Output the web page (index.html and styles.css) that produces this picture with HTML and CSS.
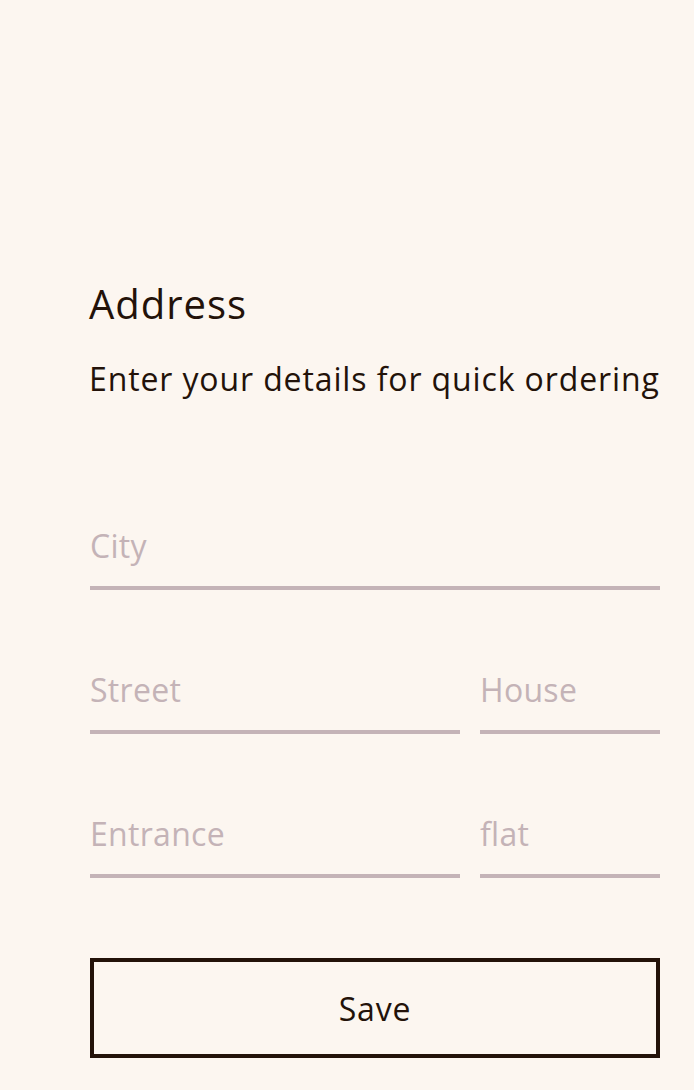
FILE: index.html
```html
<!DOCTYPE html>
<html>
<head>
<meta charset="utf-8">
<link rel="stylesheet" href="styles.css">
</head>
<body>
<main class="page">
  <h1 class="title">Address</h1>
  <p class="subtitle">Enter your details for quick ordering</p>
  <form class="form">
    <div class="row">
      <input class="field" type="text" placeholder="City">
    </div>
    <div class="row split">
      <input class="field" type="text" placeholder="Street">
      <input class="field" type="text" placeholder="House">
    </div>
    <div class="row split">
      <input class="field" type="text" placeholder="Entrance">
      <input class="field" type="text" placeholder="flat">
    </div>
    <button class="save" type="button">Save</button>
  </form>
</main>
</body>
</html>
```
FILE: styles.css
```css
html, body {
  margin: 0;
  padding: 0;
  background: #fcf6f0;
}
body {
  font-family: "Open Sans", "Noto Sans", sans-serif;
  color: #231209;
}
.page {
  padding: 274px 34px 0 89px;
}
.title {
  margin: 0;
  font-size: 40px;
  font-weight: 400;
  line-height: 60px;
  letter-spacing: 1px;
}
.subtitle {
  margin: 21px 0 0;
  font-size: 32px;
  line-height: 48px;
  letter-spacing: 0.88px;
  white-space: nowrap;
}
.form {
  display: flex;
  flex-direction: column;
  margin: 120px 0 0 1px;
}
.row {
  display: flex;
  gap: 20px;
  margin-bottom: 77px;
}
.split .field:first-child {
  flex: 0 0 370px;
}
.split .field:last-child {
  flex: 1;
}
.field {
  width: 100%;
  min-width: 0;
  box-sizing: border-box;
  height: 67px;
  padding: 0 0 19px;
  border: 0;
  border-bottom: 4px solid #c4b3b7;
  background: transparent;
  font-family: inherit;
  font-size: 32px;
  letter-spacing: 0.3px;
  color: #231209;
  outline: none;
}
.field::placeholder {
  color: #c4b3b7;
}
.save {
  margin-top: 3px;
  height: 100px;
  width: 570px;
  box-sizing: border-box;
  border: 4px solid #231209;
  background: transparent;
  font-family: inherit;
  font-size: 32px;
  letter-spacing: 0.8px;
  color: #231209;
}
```
